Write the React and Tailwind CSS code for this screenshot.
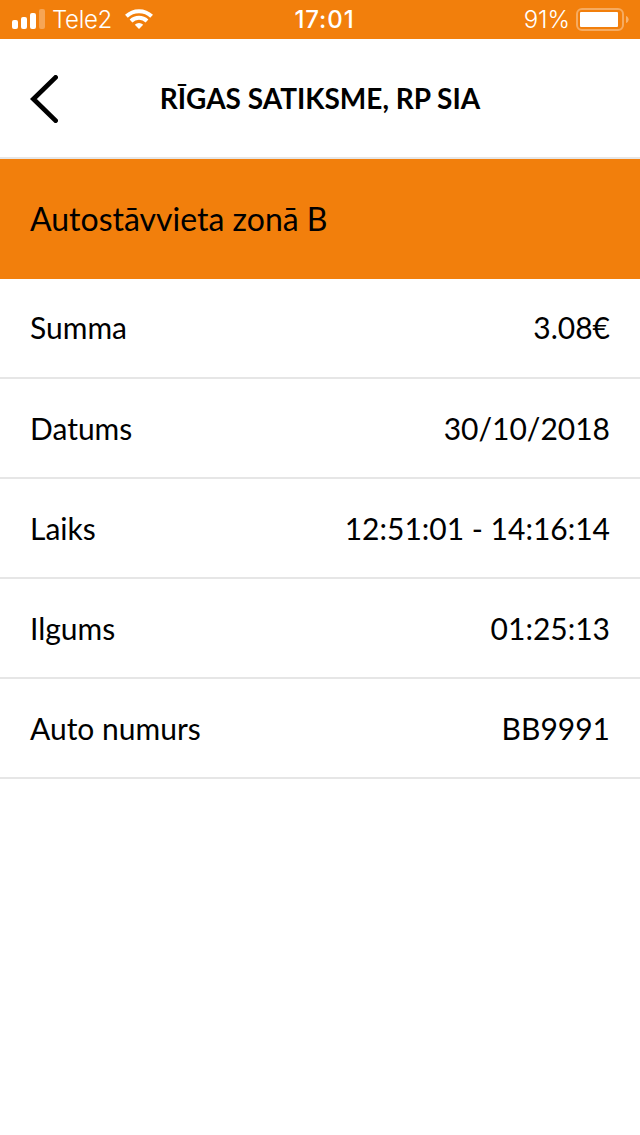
const DETAILS = [
  { label: 'Summa', value: '3.08€' },
  { label: 'Datums', value: '30/10/2018' },
  { label: 'Laiks', value: '12:51:01 - 14:16:14' },
  { label: 'Ilgums', value: '01:25:13' },
  { label: 'Auto numurs', value: 'BB9991' },
];

export default function App() {
  return (
    <div className="flex min-h-screen flex-col bg-white font-['Lato',sans-serif] text-black">
      <StatusBar />

      <header className="flex h-[120px] items-center border-b-2 border-[#e6e6e6] px-[30px]">
        <button className="w-[50px] pt-0.5" aria-label="Back">
          <svg width="28" height="48" viewBox="0 0 28 48" fill="none" stroke="black" strokeWidth="4.8" strokeLinecap="round">
            <path d="M25.6 2.4 3.4 24l22.2 21.6" />
          </svg>
        </button>
        <h1 className="flex-1 text-center text-[28px] font-bold">RĪGAS SATIKSME, RP SIA</h1>
        <div className="w-[50px]" />
      </header>

      <h2 className="flex h-[120px] items-center bg-[#f27f0c] px-[30px] text-[32px]">
        Autostāvvieta zonā B
      </h2>

      <dl className="text-[30px]">
        {DETAILS.map(d => (
          <DetailRow key={d.label} label={d.label} value={d.value} />
        ))}
      </dl>
    </div>
  );
}

function DetailRow({ label, value }) {
  return (
    <div className="flex h-[100px] items-center justify-between border-b-2 border-[#e6e6e6] px-[30px] pt-px first:pt-0 first:pb-px">
      <dt>{label}</dt>
      <dd>{value}</dd>
    </div>
  );
}

function StatusBar() {
  return (
    <div className="grid h-[39px] grid-cols-3 items-center bg-[#f27f0c] pr-[11px] pl-3 font-['Inter',sans-serif] text-[24px] text-white">
      {/* Signal, carrier, wifi */}
      <div className="flex items-center">
        <svg className="mb-px" width="33" height="20" viewBox="0 0 33 20" fill="white">
          <rect x="0" y="11" width="6" height="9" rx="2" />
          <rect x="9" y="8" width="6" height="12" rx="2" />
          <rect x="18" y="4" width="6" height="16" rx="2" />
          <rect x="27" y="0" width="6" height="20" rx="2" opacity="0.3" />
        </svg>
        <span className="ml-[7px] w-[61px] pt-px font-light tracking-[-0.3px]">Tele2</span>
        <svg className="mb-px ml-3" width="28" height="20" viewBox="0 0 28 20" fill="none" stroke="white" strokeWidth="4">
          <path d="M1.4 7.2a18.3 18.3 0 0 1 25.2 0M6 12a11.6 11.6 0 0 1 16 0" />
          <path d="m14 20-4.2-4.3a6 6 0 0 1 8.4 0z" fill="white" stroke="none" />
        </svg>
      </div>

      <div className="pt-px pl-2 text-center font-medium tracking-[0.9px]">17:01</div>

      {/* Battery */}
      <div className="flex items-center justify-end gap-1.5">
        <span className="pt-px font-light">91%</span>
        <svg width="53" height="23" viewBox="0 0 53 23" fill="white">
          <rect x="1" y="1" width="46" height="21" rx="5" fill="none" stroke="white" strokeWidth="2" opacity="0.35" />
          <rect x="4" y="4" width="38" height="15" rx="1" />
          <path d="M50 8c3.5 1 3.5 6 0 7z" opacity="0.4" />
        </svg>
      </div>
    </div>
  );
}
